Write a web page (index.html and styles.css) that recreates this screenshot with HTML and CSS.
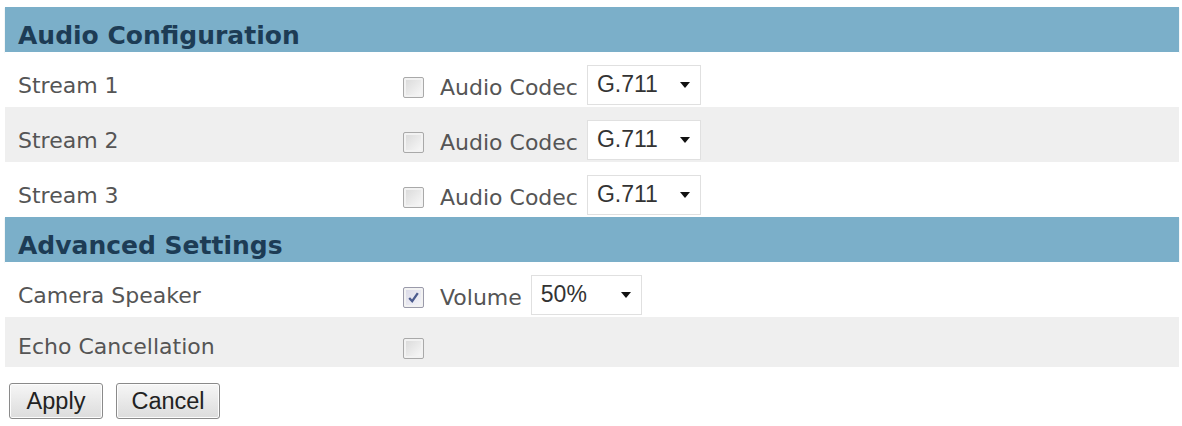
FILE: index.html
```html
<!DOCTYPE html>
<html lang="en">
<head>
    <meta charset="UTF-8">
    <title>Audio</title>
    <link rel="stylesheet" href="styles.css">
</head>
<body>
    <div class="panel">
        <div class="section-title">Audio Configuration</div>

        <div class="row">
            <div class="label">Stream 1</div>
            <div class="field">
                <span class="check"></span>
                <span class="field-text">Audio Codec</span>
                <div class="select codec"><span>G.711</span><span class="arrow"></span></div>
            </div>
        </div>
        <div class="row alt">
            <div class="label">Stream 2</div>
            <div class="field">
                <span class="check"></span>
                <span class="field-text">Audio Codec</span>
                <div class="select codec"><span>G.711</span><span class="arrow"></span></div>
            </div>
        </div>
        <div class="row">
            <div class="label">Stream 3</div>
            <div class="field">
                <span class="check"></span>
                <span class="field-text">Audio Codec</span>
                <div class="select codec"><span>G.711</span><span class="arrow"></span></div>
            </div>
        </div>

        <div class="section-title">Advanced Settings</div>

        <div class="row">
            <div class="label">Camera Speaker</div>
            <div class="field">
                <span class="check checked">
                    <svg width="15" height="15" viewBox="0 0 15 15"><path d="M3.2 8 L6.2 11.2 L11.8 3.2" fill="none" stroke="#4b5b8e" stroke-width="2.3"/></svg>
                </span>
                <span class="field-text">Volume</span>
                <div class="select volume"><span>50%</span><span class="arrow"></span></div>
            </div>
        </div>
        <div class="row alt short">
            <div class="label">Echo Cancellation</div>
            <div class="field">
                <span class="check"></span>
            </div>
        </div>
    </div>

    <div class="actions">
        <button class="btn apply">Apply</button>
        <button class="btn cancel">Cancel</button>
    </div>
</body>
</html>
```

FILE: styles.css
```css
body {
    margin: 0;
    padding: 7px 3px 0 5px;
    background: #fff;
    font-family: "DejaVu Sans", Verdana, sans-serif;
}

.section-title {
    height: 45px;
    line-height: 45px;
    padding: 6px 0 0 13px;
    box-sizing: border-box;
    background-color: #7bafc9;
    color: #1d3c55;
    font-weight: bold;
    font-size: 25px;
    box-shadow: 0 1px 1px rgba(80, 120, 140, 0.4);
}

.row {
    display: flex;
    align-items: center;
    height: 55px;
    padding-top: 12px;
    box-sizing: border-box;
    background: #fff;
}

.row.alt {
    background: #efefef;
}

.row.short {
    height: 50px;
    padding-top: 9px;
}

.label {
    width: 398px;
    padding-left: 13px;
    box-sizing: border-box;
    font-size: 22px;
    color: #555;
}

.field {
    display: flex;
    align-items: center;
    padding-top: 4px;
}

.check {
    width: 21px;
    height: 21px;
    border: 1px solid #a9a9a9;
    border-radius: 2px;
    box-sizing: border-box;
    background: linear-gradient(135deg, #d8d8d8, #fafafa);
    box-shadow: inset 0 0 0 2px #f2f2f2;
    display: inline-flex;
    align-items: center;
    justify-content: center;
    margin-right: 16px;
}

.check.checked {
    border-color: #9a9aaa;
    background: linear-gradient(135deg, #d8d8e6, #f6f6fa);
}

.field-text {
    font-size: 22px;
    color: #555;
    margin-right: 9px;
}

.select {
    display: flex;
    align-items: center;
    justify-content: space-between;
    height: 40px;
    margin-top: -6px;
    padding: 0 10px 0 9px;
    border: 1px solid #e0e0e0;
    box-sizing: border-box;
    background: #fff;
    font-family: "Liberation Sans", Arial, sans-serif;
    font-size: 23px;
    color: #333;
}

.select.codec {
    width: 114px;
}

.select.volume {
    width: 111px;
}

.arrow {
    width: 0;
    height: 0;
    border-left: 5px solid transparent;
    border-right: 5px solid transparent;
    border-top: 6px solid #111;
}

.actions {
    display: flex;
    gap: 13px;
    margin-top: 16px;
    padding-left: 4px;
}

.btn {
    height: 36px;
    padding: 0 6px;
    border: 1px solid #8a8a8a;
    border-radius: 3px;
    background: linear-gradient(#f6f6f6, #dcdcdc);
    font-family: "Liberation Sans", Arial, sans-serif;
    font-size: 23.5px;
    color: #222;
    box-shadow: inset 0 0 0 1px #fdfdfd;
}

.btn.apply {
    width: 94px;
}

.btn.cancel {
    width: 104px;
}
```
